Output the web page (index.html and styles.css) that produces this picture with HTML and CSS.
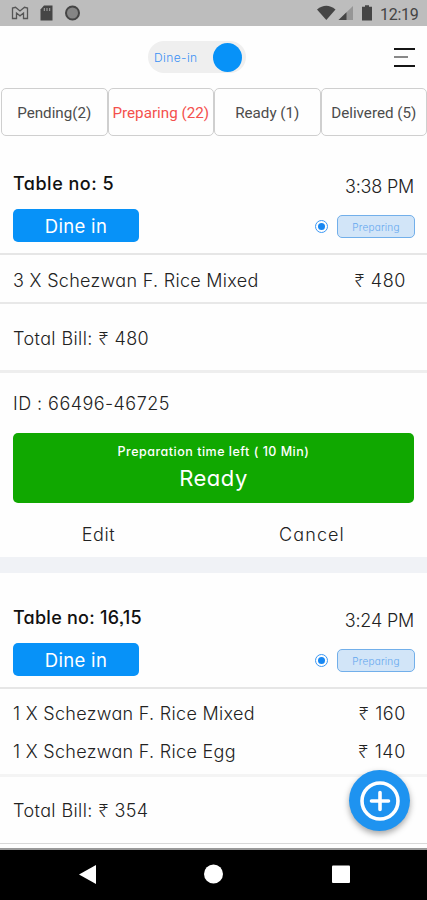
FILE: index.html
```html
<!DOCTYPE html>
<html lang="en">
<head>
<meta charset="utf-8">
<title>Orders</title>
<link rel="stylesheet" href="styles.css">
</head>
<body>
<div class="status">
  <svg class="status-left" width="72" height="18" viewBox="0 0 72 18">
    <path d="M1.500 14.500V4l3-.7L9 7l4.500-3.700 3 .7v10.500h-4V9L9 11.800 5.500 9v5.500z" fill="#bdbdbd" stroke="#555" stroke-width="1.300"/>
    <path d="M33 1.500h8.500v15H29.500V5.500z" fill="#454545"/>
    <path d="M33.300 4v3M36 4v3M38.700 4v3" stroke="#aaa" stroke-width="1"/>
    <circle cx="61.500" cy="9" r="6.500" fill="#858585" stroke="#454545" stroke-width="2"/>
  </svg>
  <svg class="status-right" width="58" height="18" viewBox="0 0 58 18">
    <path d="M0 5.500Q9.300-2 18.500 5.500L9.300 16z" fill="#454545"/>
    <path d="M36 2v14H21.500z" fill="#969696"/>
    <path d="M29.500 8.300V16h-8z" fill="#454545"/>
    <path d="M48 1.200h4v1.600h3V16.500H45V2.800h3z" fill="#454545"/>
  </svg>
  <span class="clock">12:19</span>
</div>
<header class="toolbar">
  <div class="toggle"><span>Dine-in</span><i></i></div>
  <div class="menu"><i></i><i></i><i></i></div>
</header>
<nav class="tabs">
  <div class="tab"><span>Pending(2)</span></div>
  <div class="tab active"><span>Preparing (22)</span></div>
  <div class="tab"><span>Ready (1)</span></div>
  <div class="tab"><span>Delivered (5)</span></div>
</nav>
<main>
  <section class="order">
    <div class="head">
      <div class="left"><h2>Table no: 5</h2><div class="type">Dine in</div></div>
      <div class="right"><div class="time">3:38 PM</div><div class="state"><i class="radio"></i><span class="chip">Preparing</span></div></div>
    </div>
    <div class="items one">
      <div class="row"><span class="name">3 X Schezwan F. Rice Mixed</span><span class="price"><b>₹</b> 480</span></div>
    </div>
    <div class="total"><span>Total Bill: <b>₹</b> 480</span></div>
    <div class="order-id"><span>ID : 66496-46725</span></div>
    <div class="ready"><small>Preparation time left ( 10 Min)</small><strong>Ready</strong></div>
    <div class="actions"><span>Edit</span><span class="cancel">Cancel</span></div>
  </section>
  <section class="order second">
    <div class="head">
      <div class="left"><h2>Table no: 16,15</h2><div class="type">Dine in</div></div>
      <div class="right"><div class="time">3:24 PM</div><div class="state"><i class="radio"></i><span class="chip">Preparing</span></div></div>
    </div>
    <div class="items">
      <div class="row"><span class="name">1 X Schezwan F. Rice Mixed</span><span class="price"><b>₹</b> 160</span></div>
      <div class="row"><span class="name">1 X Schezwan F. Rice Egg</span><span class="price"><b>₹</b> 140</span></div>
    </div>
    <div class="total"><span>Total Bill: <b>₹</b> 354</span></div>
  </section>
</main>
<div class="fab">
  <svg width="42" height="42" viewBox="0 0 42 42" fill="none" stroke="#fff" stroke-width="3.600"><circle cx="21" cy="21" r="18"/><path d="M21 12.500v17M12.500 21h17" stroke-linecap="round"/></svg>
</div>
<footer class="navbar">
  <svg width="427" height="50" viewBox="0 0 427 50" fill="#fff"><path d="M79 24.500l17-9.500v19z"/><circle cx="213.500" cy="24" r="9.500"/><rect x="332" y="15.500" width="18" height="17.500" rx="1"/></svg>
</footer>
</body>
</html>
```
FILE: styles.css
```css
* { box-sizing: border-box; }
body {
  margin: 0; width: 427px; height: 900px; overflow: hidden;
  display: flex; flex-direction: column; background: #fefefe; color: #222;
  font-family: Inter, "Noto Sans", sans-serif; font-weight: 300; font-size: 18px;
  font-feature-settings: "cv11", "ss03"; white-space: nowrap;
}
.status { height: 26px; flex: none; background: #bdbdbd; display: flex; align-items: center; padding: 0 8px 0 11px; }
.status-right { margin-left: auto; }
.clock { font: 400 16px Roboto, sans-serif; color: #444; width: 39px; margin-left: 5px; padding-top: 2px; letter-spacing: -.3px; }
.toolbar { height: 62px; flex: none; display: flex; justify-content: space-between; align-items: center; padding: 0 12px 0 148px; }
.toggle { width: 98px; height: 32px; border-radius: 16px; background: #efefef; display: flex; align-items: center; justify-content: space-between; padding: 0 4px 0 6px; }
.toggle span { font-size: 12px; color: #3b91f5; letter-spacing: .4px; }
.toggle i { width: 29px; height: 29px; border-radius: 50%; background: #0792f8; }
.menu { width: 21px; height: 19px; display: flex; flex-direction: column; justify-content: space-between; }
.menu i { height: 2px; background: #151515; }
.menu i:nth-child(2) { width: 14px; background: #888; }
.tabs { height: 48px; flex: none; display: grid; grid-template-columns: repeat(4, 1fr); padding: 0 0 0 1px; }
.tab { border: 1.500px solid #cfcfcf; border-radius: 5px; display: flex; align-items: center; justify-content: center; font: 400 15.200px Roboto, sans-serif; color: #4c4c4c; padding-top: 1px; }
.active { color: #f4504d; }
main { flex: 1; min-height: 0; overflow: hidden; }
.order { border-bottom: 16px solid #f0f2f6; }
.head { height: 119px; padding: 36px 12px 0 13px; display: flex; justify-content: space-between; border-bottom: 2px solid #e6e6e6; }
h2 { margin: 0; font-size: 18px; line-height: 24px; font-weight: 450; color: #111; letter-spacing: .5px; }
.type { width: 126px; height: 33px; margin-top: 13px; border-radius: 5px; background: #0792f8; color: #fff; display: flex; align-items: center; justify-content: center; font-size: 18.500px; font-weight: 400; letter-spacing: .3px; }
.right { display: flex; flex-direction: column; align-items: flex-end; }
.time { line-height: 24px; margin: 3px 1px 0 0; letter-spacing: -.2px; }
.state { display: flex; align-items: center; gap: 9px; margin-top: 16px; }
.radio { width: 13px; height: 13px; border-radius: 50%; border: 1.300px solid #3b98f5; display: flex; align-items: center; justify-content: center; }
.radio::after { content: ""; width: 7px; height: 7px; border-radius: 50%; background: #1787f2; }
.chip { width: 78px; height: 23px; border: 1.500px solid #72afea; border-radius: 5px; background: #d2e5f8; color: #65a8ef; font-size: 10px; letter-spacing: .2px; display: flex; align-items: center; justify-content: center; }
.items { padding: 6px 21px 0 13px; border-bottom: 2px solid #e8e8e8; letter-spacing: .3px; }
.items.one { height: 49px; }
.price { letter-spacing: .6px; }
.row { height: 38px; display: flex; align-items: center; justify-content: space-between; }
.total { height: 69px; padding: 2px 13px 0; display: flex; align-items: center; border-bottom: 3px solid #eee; letter-spacing: .4px; }
b { font-weight: 300; font-family: "Noto Sans", sans-serif; }
.order-id { height: 60px; padding: 0 13px; display: flex; align-items: center; letter-spacing: .45px; }
.ready { height: 70px; margin: 0 13px; border-radius: 5px; background: #10a800; color: #fff; display: flex; flex-direction: column; align-items: center; padding-top: 10px; }
.ready small { font-size: 12.500px; line-height: 18px; font-weight: 500; letter-spacing: .5px; }
.ready strong { font-size: 22px; line-height: 35px; font-weight: 400; letter-spacing: .5px; }
.actions { height: 54px; display: grid; grid-template-columns: 197px 230px; align-items: center; justify-items: center; padding-top: 9px; letter-spacing: .6px; }
.cancel { letter-spacing: 1.100px; }
.second { border-bottom-color: #fefefe; }
.second .head { height: 116px; padding-top: 33px; }
.second h2 { letter-spacing: .25px; }
.second .items { height: 88px; padding-top: 5px; border-bottom: 3px solid #f4f4f4; }
.second .total { height: 67px; padding-top: 0; border-bottom: 1px solid #d8d8d8; }
.fab { position: absolute; left: 349px; top: 770px; width: 61px; height: 61px; border-radius: 50%; background: #1e93f0; box-shadow: 0 3px 6px rgba(0,0,0,.35); display: flex; align-items: center; justify-content: center; }
.navbar { height: 52px; flex: none; background: #000; border-top: 2px solid #999; }
.navbar svg { display: block; }
```
